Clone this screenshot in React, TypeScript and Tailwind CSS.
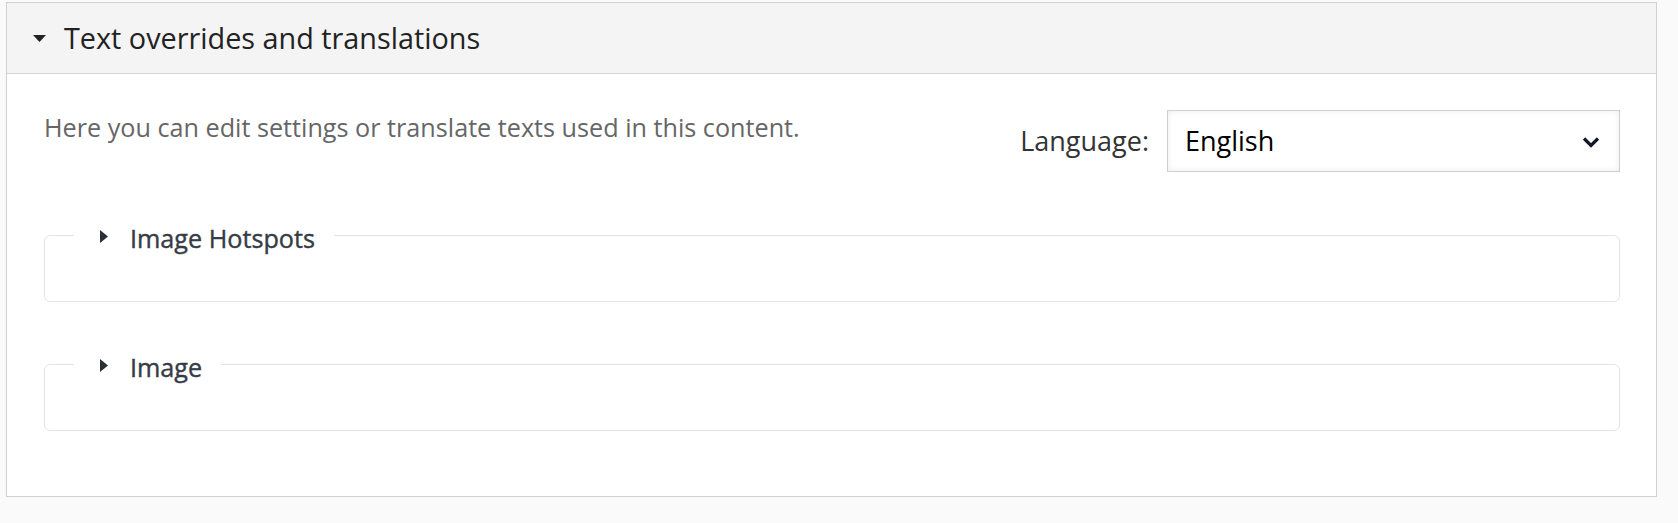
import { useState } from "react";

const sections = ["Image Hotspots", "Image"];

export default function App() {
  const [open, setOpen] = useState(true);
  const [lang, setLang] = useState("English");

  return (
    <div className="min-h-[523px] bg-[#fafafa] pl-[6px] pr-[21px] pt-[2px] font-['Open_Sans',sans-serif]">
      <div className="border border-[#d0d0d0] bg-white">
        {/* Header */}
        <button
          onClick={() => setOpen(!open)}
          className="flex h-[71px] w-full items-center bg-[#f4f4f4] border-b border-[#d6d6d6] pl-[26px] text-left"
        >
          <svg width="13" height="7" viewBox="0 0 13 7" className="mr-[18px] mt-[1px]">
            <path d="M0 0h13L6.5 7z" fill="#222" />
          </svg>
          <span className="text-[28.8px] leading-none text-[#222]">Text overrides and translations</span>
        </button>

        {open && (
          <div className="pl-[37px] pr-[36px] pt-[35px] pb-[65px]">
            <div className="flex items-start justify-between">
              <p className="text-[25.2px] leading-[1.5] text-[#666]">
                Here you can edit settings or translate texts used in this content.
              </p>
              <div className="mt-[1px] flex items-center">
                <label className="mr-[18px] text-[27px] text-[#333]">Language:</label>
                <div className="relative flex h-[62px] w-[453px] items-center border border-[#cfcfcf] bg-white pl-[17px] shadow-[inset_0_0_6px_rgba(0,0,0,0.08)]">
                  <select
                    value={lang}
                    onChange={(e) => setLang(e.target.value)}
                    className="w-full appearance-none bg-transparent text-[27px] text-black outline-none"
                  >
                    <option>English</option>
                    <option>Deutsch</option>
                    <option>Français</option>
                  </select>
                  <svg width="18" height="12" viewBox="0 0 18 12" className="pointer-events-none absolute right-[19px] top-[25px]">
                    <path d="M2 2.5l7 7 7-7" fill="none" stroke="#111827" strokeWidth="3.2" />
                  </svg>
                </div>
              </div>
            </div>

            {sections.map((s, i) => (
              <fieldset
                key={s}
                className={`rounded-[6px] border border-[#e3e3ec] px-[29px] pb-[48px] ${i === 0 ? "mt-[45px]" : "mt-[44px]"}`}
              >
                <legend className="pl-[26px] pr-[19px]">
                  <div className="flex translate-y-[3px] items-center">
                    <svg width="8" height="13" viewBox="0 0 8 13" className="mr-[22px] -mt-[3px]">
                      <path d="M0 0l8 6.5L0 13z" fill="#2b2f36" />
                    </svg>
                    <span className="text-[25.2px] leading-[36px] text-[#363c45] [-webkit-text-stroke:0.4px_#363c45]">{s}</span>
                  </div>
                </legend>
              </fieldset>
            ))}
          </div>
        )}
      </div>
    </div>
  );
}
